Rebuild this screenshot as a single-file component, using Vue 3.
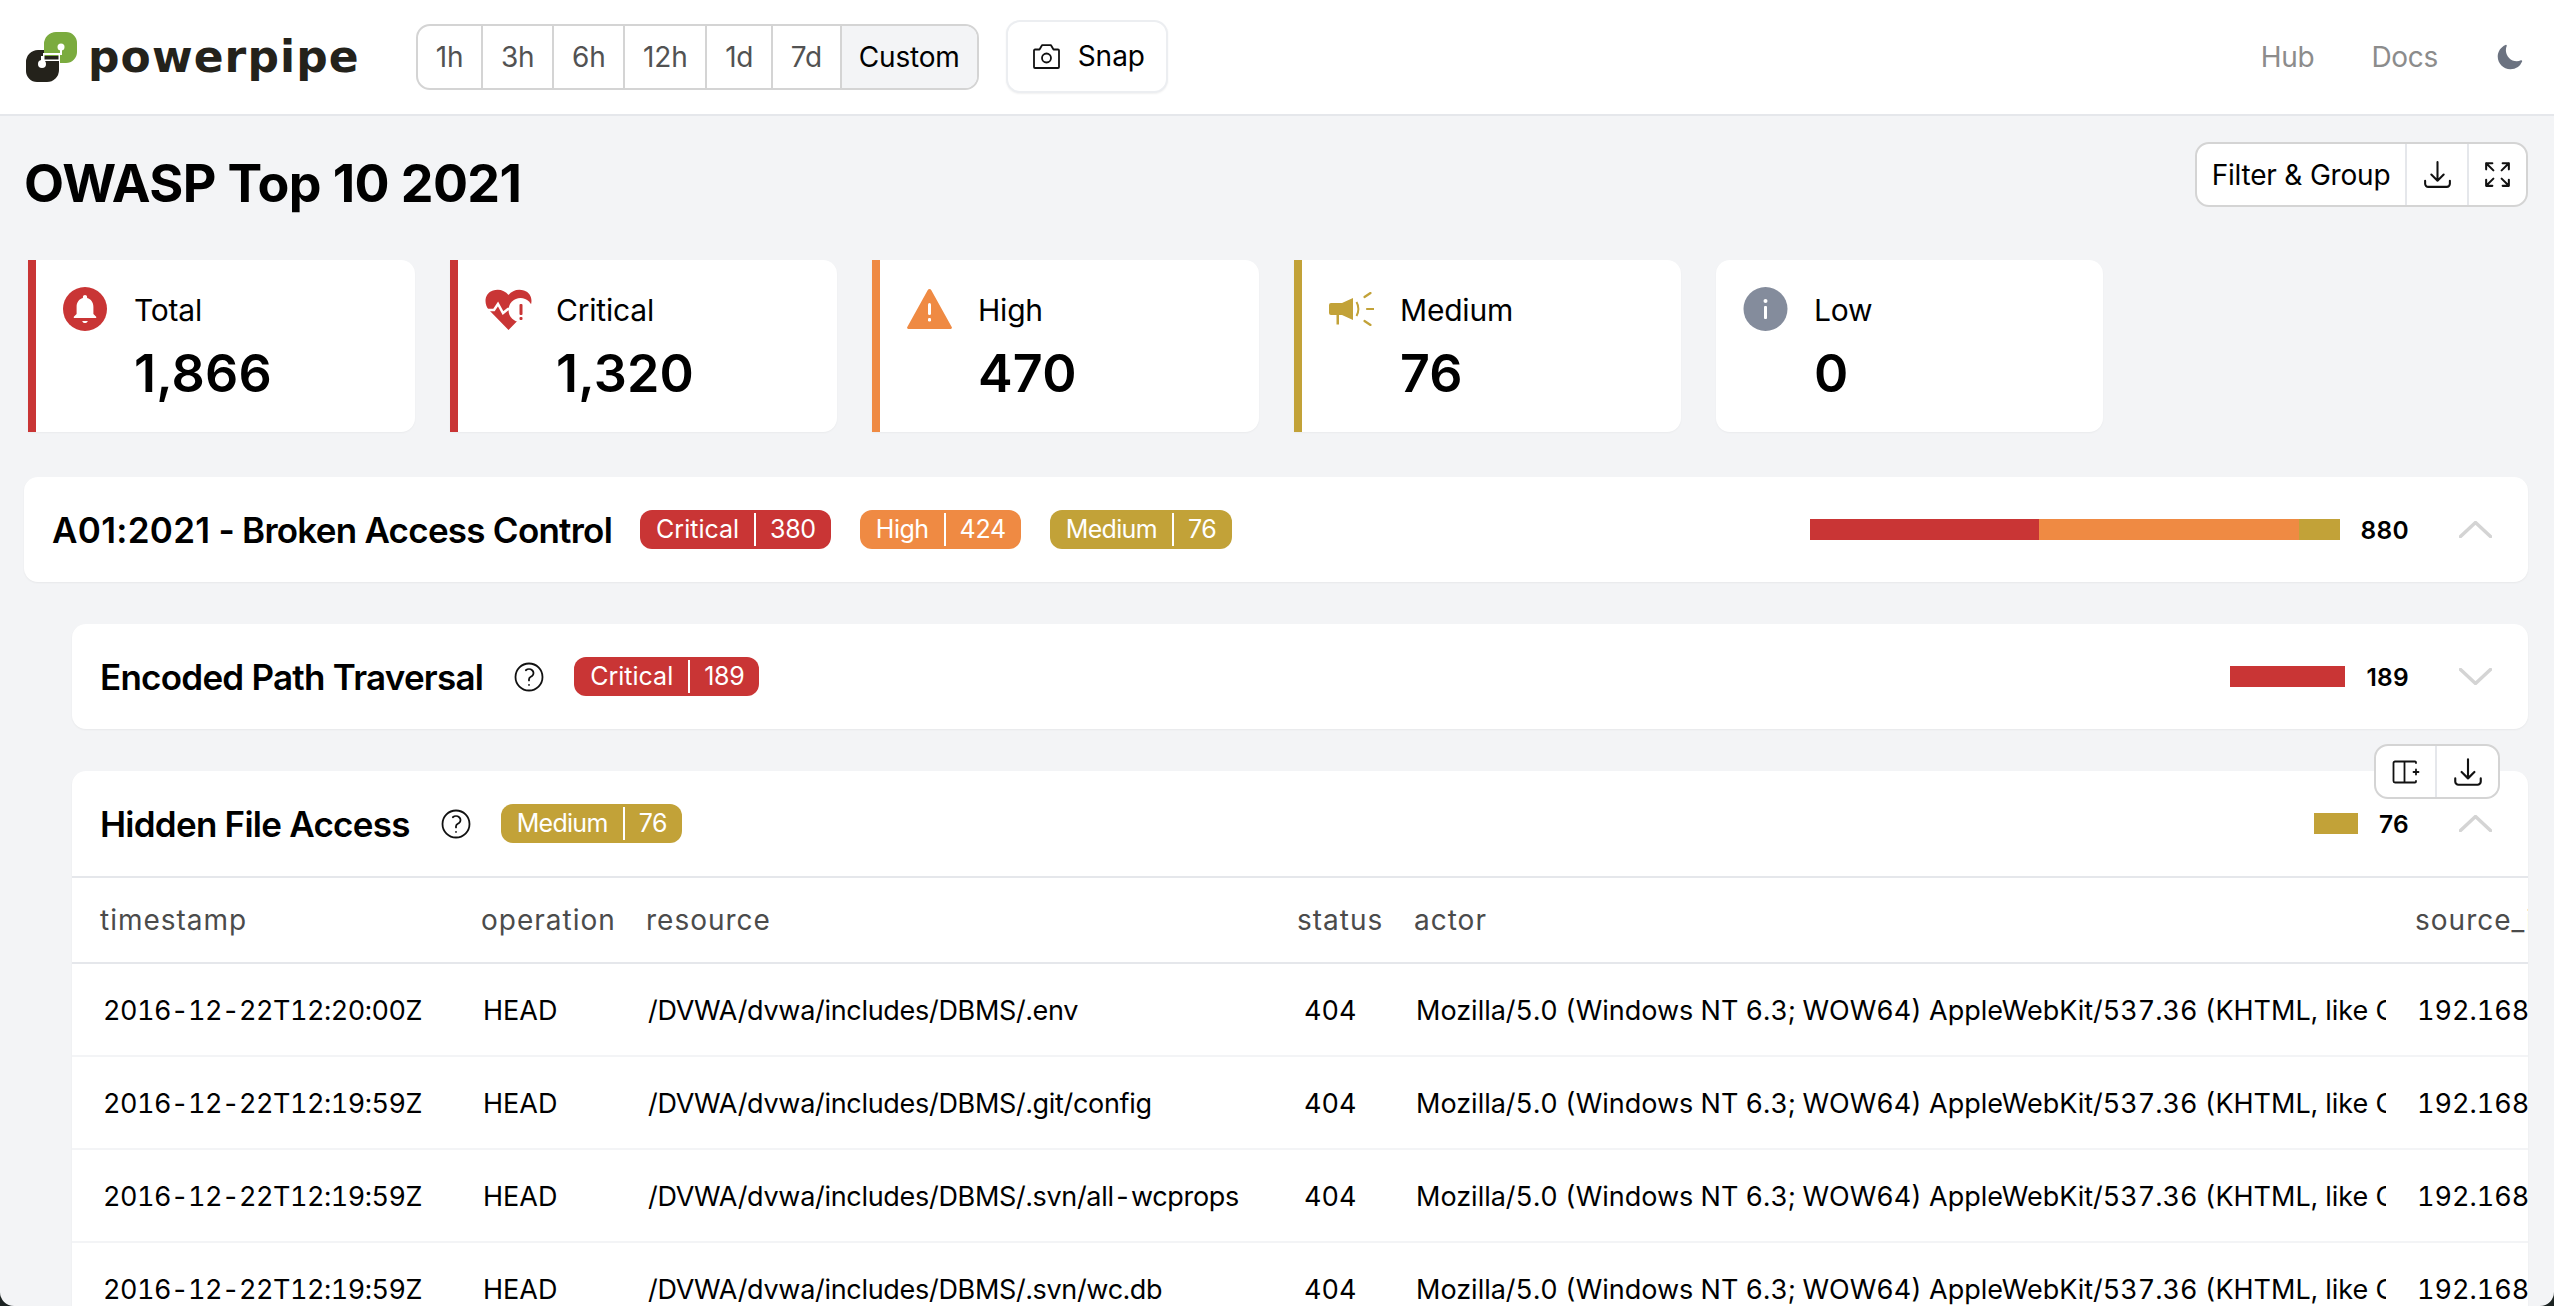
<script setup>
const ranges = ["1h", "3h", "6h", "12h", "1d", "7d"];

const cards = [
  { label: "Total", value: "1,866", icon: "bell", accent: "red" },
  { label: "Critical", value: "1,320", icon: "heart", accent: "red" },
  { label: "High", value: "470", icon: "warn", accent: "orange" },
  { label: "Medium", value: "76", icon: "horn", accent: "yellow" },
  { label: "Low", value: "0", icon: "info", accent: "" },
];

// width is the bar segment in px
const topBadges = [
  { name: "Critical", count: 380, kind: "red", width: 229 },
  { name: "High", count: 424, kind: "orange", width: 260 },
  { name: "Medium", count: 76, kind: "yellow", width: 41 },
];

const columns = ["timestamp", "operation", "resource", "status", "actor", "source_ip"];
const actor =
  "Mozilla/5.0 (Windows NT 6.3; WOW64) AppleWebKit/537.36 (KHTML, like Gecko) Chrome/55.0.2883.87 Safari/537.36";
const rows = [
  { ts: "2016-12-22T12:20:00Z", path: "/DVWA/dvwa/includes/DBMS/.env" },
  { ts: "2016-12-22T12:19:59Z", path: "/DVWA/dvwa/includes/DBMS/.git/config" },
  { ts: "2016-12-22T12:19:59Z", path: "/DVWA/dvwa/includes/DBMS/.svn/all-wcprops" },
  { ts: "2016-12-22T12:19:59Z", path: "/DVWA/dvwa/includes/DBMS/.svn/wc.db" },
];
</script>

<template>
  <div class="page">
    <header class="topbar">
      <div class="logo">
        <svg class="logo-mark" viewBox="0 0 52 50" width="52" height="50">
          <path fill="#7bab3f" d="M18 24V12A12 12 0 0 1 30 0h10a11 11 0 0 1 11 11v9a11 11 0 0 1-11 11h-6v-7z" />
          <circle cx="35" cy="15" r="3.5" fill="#fff" />
          <rect x="34" y="15" width="2" height="8" fill="#fff" />
          <path fill="#24221b" d="M0 30a12 12 0 0 1 12-12h6v6h15v14a12 12 0 0 1-12 12H11A11 11 0 0 1 0 39z" />
          <circle cx="16" cy="32" r="4" fill="#fff" />
          <rect x="15" y="24" width="2.4" height="8" fill="#fff" />
          <rect x="17" y="21" width="17" height="2" fill="#fff" />
          <rect x="17" y="27.500" width="17" height="1.500" fill="#fff" />
          <rect x="17" y="21" width="1.500" height="8" fill="#fff" />
          <rect x="32.500" y="21" width="1.500" height="8" fill="#fff" />
        </svg>
        <span class="wordmark">powerpipe</span>
      </div>

      <div class="btn-group ranges">
        <button v-for="r in ranges" :key="r" class="range">{{ r }}</button>
        <button class="range active">Custom</button>
      </div>

      <button class="snap">
        <svg width="27" height="25" viewBox="0 0 27 25" fill="none" stroke="#111" stroke-width="1.800" stroke-linejoin="round">
          <path d="M1 6.500a1 1 0 0 1 1-1h4.500L9 1.200h9l2.500 4.300H25a1 1 0 0 1 1 1V23a1 1 0 0 1-1 1H2a1 1 0 0 1-1-1z" />
          <circle cx="13.500" cy="14" r="4.500" />
        </svg>
        Snap
      </button>

      <nav class="links">
        <a>Hub</a>
        <a>Docs</a>
        <svg class="moon" width="29" height="29" viewBox="0 0 24 24" fill="#6b7280">
          <path d="M9.528 1.718a.75.75 0 01.162.819A8.97 8.97 0 009 6a9 9 0 009 9 8.97 8.97 0 003.463-.69.75.75 0 01.981.98 10.503 10.503 0 01-9.694 6.46c-5.799 0-10.5-4.701-10.5-10.5 0-4.368 2.667-8.112 6.46-9.694a.75.75 0 01.818.162z" />
        </svg>
      </nav>
    </header>

    <main class="content">
      <div class="title-row">
        <h1>OWASP Top 10 2021</h1>
        <div class="btn-group tools">
          <button class="tool filter">Filter &amp; Group</button>
          <button class="tool icon-tool">
            <svg width="33" height="33" viewBox="0 0 24 24" fill="none" stroke="#111" stroke-width="1.500" stroke-linecap="round" stroke-linejoin="round">
              <path d="M3 16.500v2.250A2.250 2.250 0 0 0 5.250 21h13.500A2.250 2.250 0 0 0 21 18.750V16.500M16.500 12 12 16.500m0 0L7.500 12m4.500 4.500V3" />
            </svg>
          </button>
          <button class="tool icon-tool last">
            <svg width="33" height="33" viewBox="0 0 24 24" fill="none" stroke="#111" stroke-width="1.500" stroke-linecap="round" stroke-linejoin="round">
              <path d="M3.750 3.750v4.500m0-4.500h4.500m-4.500 0L9 9M3.750 20.250v-4.500m0 4.500h4.500m-4.500 0L9 15M20.250 3.750h-4.500m4.500 0v4.500m0-4.500L15 9m5.250 11.250h-4.500m4.500 0v-4.500m0 4.500L15 15" />
            </svg>
          </button>
        </div>
      </div>

      <section class="cards">
        <div v-for="c in cards" :key="c.label" class="card" :class="c.accent">
          <div class="card-icon">
            <svg v-if="c.icon === 'bell'" width="44" height="44" viewBox="0 0 44 44">
              <circle cx="22" cy="22" r="22" fill="#c93535" />
              <path fill="#fff" transform="translate(5.200 4.500) scale(1.400)" d="M12 22.500c1 0 1.800-.6 2-1.500h-4c.2.900 1 1.500 2 1.500zm6-6.500v-5c0-3.070-1.640-5.640-4.500-6.320V4c0-.830-.670-1.500-1.500-1.500s-1.500.670-1.500 1.500v.680C7.630 5.360 6 7.920 6 11v5l-2 2v1h16v-1l-2-2z" />
            </svg>
            <svg v-else-if="c.icon === 'heart'" class="heart" width="47" height="41" viewBox="0 0 47 41">
              <path fill="#c93535" d="M23.500 41 4 21C-2 14 0 4 8 1.500 14-.5 20 1.500 23.500 6 27 1.500 33-.5 39 1.500 47 4 49 14 43 21z" />
              <circle cx="35.500" cy="21" r="12" fill="#fff" />
              <path fill="none" stroke="#fff" stroke-width="2.500" d="M0 21h9l4-6 5 9 5-4h8" />
              <rect x="34.500" y="15" width="3" height="11" rx="1" fill="#c93535" />
              <rect x="34.500" y="28" width="3" height="3" rx="1" fill="#c93535" />
            </svg>
            <svg v-else-if="c.icon === 'warn'" width="45" height="40" viewBox="0 0 45 40">
              <path fill="#ef8a43" d="M20.800 1a2 2 0 0 1 3.400 0l20.500 37a1.300 1.300 0 0 1-1.200 2H1.500a1.300 1.300 0 0 1-1.200-2z" />
              <rect x="21" y="14" width="3" height="12" rx="1.500" fill="#fff" />
              <rect x="21" y="29" width="3" height="3.500" rx="1.200" fill="#fff" />
            </svg>
            <svg v-else-if="c.icon === 'horn'" width="45" height="34" viewBox="0 0 45 34" fill="#c2a238">
              <path d="M2 11h11L24 6v22l-11-5H9v9H8V23H2a2 2 0 0 1-2-2v-8a2 2 0 0 1 2-2z" />
              <rect x="7.500" y="23" width="2.500" height="9.500" />
              <path fill="none" stroke="#c2a238" stroke-width="2" d="M27.500 10c2.500 4 2.500 10 0 14" />
              <path fill="none" stroke="#c2a238" stroke-width="2.200" stroke-linecap="round" d="M35.500 5l6-4M38 17h6.500M35.500 29l6 4" />
            </svg>
            <svg v-else width="46" height="44" viewBox="0 0 44 44">
              <circle cx="22" cy="22" r="22" fill="#848c9c" />
              <rect x="20.500" y="19" width="3" height="13" rx="1" fill="#fff" />
              <circle cx="22" cy="14" r="2" fill="#fff" />
            </svg>
          </div>
          <div class="card-body">
            <div class="card-label">{{ c.label }}</div>
            <div class="card-value">{{ c.value }}</div>
          </div>
        </div>
      </section>

      <section class="panel">
        <div class="group-row">
          <span class="group-title"><span class="code">A01:2021</span> - Broken Access Control</span>
          <span v-for="b in topBadges" :key="b.name" class="badge" :class="b.kind">
            <span class="badge-name">{{ b.name }}</span><span class="badge-count">{{ b.count }}</span>
          </span>
          <span class="bar">
            <span v-for="b in topBadges" :key="b.name" class="seg" :class="b.kind" :style="{ width: b.width + 'px' }"></span>
          </span>
          <span class="count">880</span>
          <svg class="chevron" width="33" height="17" viewBox="0 0 33 17" fill="none" stroke="#d4d4d4" stroke-width="3.500" stroke-linecap="round" stroke-linejoin="round">
            <path d="M1.500 15.500 16.500 1.500l15 14" />
          </svg>
        </div>
      </section>

      <section class="panel nested">
        <div class="group-row">
          <span class="group-title">Encoded Path Traversal</span>
          <svg class="help" width="36" height="36" viewBox="0 0 24 24" fill="none" stroke="#111" stroke-width="1.200" stroke-linecap="round" stroke-linejoin="round">
            <path d="M9.879 7.519c1.171-1.025 3.071-1.025 4.242 0 1.172 1.025 1.172 2.687 0 3.712-.203.179-.43.326-.67.442-.745.361-1.450.999-1.450 1.827v.750M21 12a9 9 0 11-18 0 9 9 0 0118 0zm-9 5.250h.008v.008H12v-.008z" />
          </svg>
          <span class="badge red">
            <span class="badge-name">Critical</span><span class="badge-count">189</span>
          </span>
          <span class="bar">
            <span class="seg red" :style="{ width: '115px' }"></span>
          </span>
          <span class="count">189</span>
          <svg class="chevron" width="33" height="17" viewBox="0 0 33 17" fill="none" stroke="#d4d4d4" stroke-width="3.500" stroke-linecap="round" stroke-linejoin="round">
            <path d="M1.500 1.500 16.500 15.500l15-14" />
          </svg>
        </div>
      </section>

      <section class="panel nested open">
        <div class="hover-tools btn-group">
          <button class="tool small">
            <svg width="28" height="24" viewBox="0 0 28 24" fill="none" stroke="#111" stroke-width="1.800" stroke-linecap="round" stroke-linejoin="round">
              <path d="M24 3V2.500a1 1 0 0 0-1-1H3a1.500 1.500 0 0 0-1.500 1.500v18a1.500 1.500 0 0 0 1.500 1.500h20a1 1 0 0 0 1-1V21M12.500 1.500v21M24 9.500v5M21.500 12h5" />
            </svg>
          </button>
          <button class="tool small last">
            <svg width="34" height="34" viewBox="0 0 24 24" fill="none" stroke="#111" stroke-width="1.500" stroke-linecap="round" stroke-linejoin="round">
              <path d="M3 16.500v2.250A2.250 2.250 0 0 0 5.250 21h13.500A2.250 2.250 0 0 0 21 18.750V16.500M16.500 12 12 16.500m0 0L7.500 12m4.500 4.500V3" />
            </svg>
          </button>
        </div>
        <div class="group-row">
          <span class="group-title">Hidden File Access</span>
          <svg class="help" width="36" height="36" viewBox="0 0 24 24" fill="none" stroke="#111" stroke-width="1.200" stroke-linecap="round" stroke-linejoin="round">
            <path d="M9.879 7.519c1.171-1.025 3.071-1.025 4.242 0 1.172 1.025 1.172 2.687 0 3.712-.203.179-.43.326-.67.442-.745.361-1.450.999-1.450 1.827v.750M21 12a9 9 0 11-18 0 9 9 0 0118 0zm-9 5.250h.008v.008H12v-.008z" />
          </svg>
          <span class="badge yellow">
            <span class="badge-name">Medium</span><span class="badge-count">76</span>
          </span>
          <span class="bar">
            <span class="seg yellow" :style="{ width: '44px' }"></span>
          </span>
          <span class="count">76</span>
          <svg class="chevron" width="33" height="17" viewBox="0 0 33 17" fill="none" stroke="#d4d4d4" stroke-width="3.500" stroke-linecap="round" stroke-linejoin="round">
            <path d="M1.500 15.500 16.500 1.500l15 14" />
          </svg>
        </div>
        <div class="table-wrap">
          <table>
            <colgroup>
              <col style="width: 407px" />
              <col style="width: 165px" />
              <col style="width: 651px" />
              <col style="width: 117px" />
              <col style="width: 1001px" />
              <col style="width: 300px" />
            </colgroup>
            <thead>
              <tr>
                <th v-for="c in columns" :key="c">{{ c }}</th>
              </tr>
            </thead>
            <tbody>
              <tr v-for="(r, i) in rows" :key="i">
                <td class="ts">{{ r.ts }}</td>
                <td>HEAD</td>
                <td class="path">{{ r.path }}</td>
                <td class="status">404</td>
                <td><div class="clip">{{ actor }}</div></td>
                <td>192.168.56.1</td>
              </tr>
            </tbody>
          </table>
        </div>
      </section>
    </main>
  </div>
</template>

<style>
html {
  background: #1c2322;
}
body {
  margin: 0;
  overflow: hidden;
}
</style>

<style scoped>
.page {
  height: 100vh;
  overflow: hidden;
  display: flex;
  flex-direction: column;
  background: #f3f4f6;
  color: #000;
  font-family: Inter, "Liberation Sans", sans-serif;
  border-radius: 0 0 14px 14px;
}

button {
  font: inherit;
  background: none;
  border: 0;
  padding: 0;
  color: inherit;
}

.topbar {
  flex: none;
  height: 114px;
  display: flex;
  align-items: center;
  padding: 0 30px 0 26px;
  background: #fff;
  border-bottom: 2px solid #e5e7eb;
}

.logo {
  width: 390px;
  display: flex;
  align-items: center;
  gap: 10px;
}
.wordmark {
  font-family: "DejaVu Sans", sans-serif;
  font-weight: 700;
  font-size: 44px;
  line-height: 50px;
  letter-spacing: 1.100px;
  color: #24221b;
}

.btn-group {
  display: flex;
  border: 2px solid #d4d4d4;
  border-radius: 14px;
  background: #fff;
  overflow: hidden;
}

.ranges {
  height: 66px;
  box-sizing: border-box;
  margin-bottom: 1px;
}
.range {
  font-size: 28px;
  letter-spacing: -0.2px;
  padding: 0 17.800px;
  color: #525252;
  border-right: 2px solid #d4d4d4;
}
.range.active {
  color: #000;
  background: #f3f4f6;
  border-right: 0;
  padding: 0 17px;
}

.snap {
  margin: 0 0 2px 27px;
  height: 73px;
  box-sizing: border-box;
  padding: 0 21px 0 25px;
  display: flex;
  align-items: center;
  gap: 18px;
  font-size: 28px;
  border: 2px solid #eceef1;
  border-radius: 14px;
  background: #fff;
  box-shadow: 0 1px 2px rgba(0, 0, 0, 0.06);
}

.links {
  margin-left: auto;
  display: flex;
  align-items: center;
  font-size: 28px;
  letter-spacing: -0.3px;
  color: #8c8c8c;
}
.links a:first-child {
  margin-right: 57px;
}
.moon {
  margin-left: 57px;
}

.content {
  flex: 1;
  min-height: 0;
  padding: 0 26px 0 24px;
}

.title-row {
  height: 144px;
  display: flex;
  align-items: flex-start;
  justify-content: space-between;
}
h1 {
  margin: 40px 0 0;
  font-size: 52px;
  line-height: 56px;
  font-weight: 700;
  letter-spacing: -0.6px;
}

.tools {
  margin: 26px 0 0 0;
  height: 65px;
  box-sizing: border-box;
}
.tool {
  display: flex;
  align-items: center;
  justify-content: center;
  font-size: 28px;
  letter-spacing: -0.2px;
  border-right: 2px solid #e5e7eb;
}
.tool.last {
  border-right: 0;
}
.filter {
  width: 210px;
}
.icon-tool {
  width: 62px;
}
.icon-tool.last {
  width: 57px;
}

.cards {
  display: flex;
  gap: 35px;
  padding-left: 4px;
  margin-bottom: 45px;
}
.card {
  width: 387px;
  height: 172px;
  box-sizing: border-box;
  display: flex;
  padding: 27px 0 0 27px;
  background: #fff;
  border-radius: 0 14px 14px 0;
  box-shadow: 0 1px 2px rgba(0, 0, 0, 0.04);
}
.card.red {
  border-left: 8px solid #c93535;
}
.card.orange {
  border-left: 8px solid #ef8a43;
}
.card.yellow {
  border-left: 8px solid #c2a238;
}
.card:not(.red):not(.orange):not(.yellow) {
  border-radius: 14px;
}
.card-icon {
  flex: none;
  width: 45px;
  height: 44px;
  margin-right: 26px;
  display: flex;
  align-items: center;
}
.heart {
  flex: none;
}
.card-label {
  font-size: 30px;
  line-height: 46px;
  letter-spacing: -0.2px;
}
.card-value {
  margin-top: 10px;
  font-size: 52px;
  line-height: 62px;
  font-weight: 600;
  letter-spacing: 0.2px;
}

.panel {
  position: relative;
  background: #fff;
  border-radius: 14px;
  box-shadow: 0 1px 2px rgba(0, 0, 0, 0.05);
  margin-bottom: 42px;
}
.nested {
  margin-left: 48px;
}
.open {
  margin-bottom: 0;
}

.group-row {
  height: 105px;
  display: flex;
  align-items: center;
  padding: 0 36px 0 28px;
}
.group-title {
  font-size: 35px;
  letter-spacing: -0.75px;
  font-weight: 600;
  margin-right: 28px;
  white-space: nowrap;
}
.code {
  letter-spacing: 0.3px;
}
.help {
  margin: 0 27px 0 0;
  flex: none;
}

.badge {
  height: 39px;
  display: inline-flex;
  align-items: center;
  border-radius: 12px;
  margin-right: 29px;
  color: #fff;
  font-size: 25px;
  line-height: 33px;
  padding: 0 15px 0 16px;
}
.badge.red,
.seg.red {
  background: #c93535;
}
.badge.orange,
.seg.orange {
  background: #ef8a43;
}
.badge.yellow,
.seg.yellow {
  background: #c2a238;
}
.badge-name {
  padding-right: 15px;
  border-right: 2px solid #fff;
}
.badge.orange .badge-name {
  letter-spacing: -0.5px;
}
.badge.yellow .badge-name {
  letter-spacing: -0.7px;
}
.badge-count {
  padding-left: 14px;
  letter-spacing: -0.3px;
}

.bar {
  margin-left: auto;
  display: flex;
  height: 21px;
}
.seg {
  display: block;
}
.count {
  margin-left: 21px;
  font-size: 24.500px;
  font-weight: 600;
  letter-spacing: 0.3px;
}
.chevron {
  margin-left: 50px;
  flex: none;
}

.hover-tools {
  position: absolute;
  top: -27px;
  right: 28px;
  height: 55px;
  box-sizing: border-box;
  z-index: 1;
}
.small {
  width: 61px;
}

.table-wrap {
  overflow: hidden;
  border-top: 2px solid #e5e7eb;
}
table {
  table-layout: fixed;
  width: 2641px;
  border-collapse: separate;
  border-spacing: 0;
  font-size: 27px;
  font-variant-numeric: tabular-nums;
}
th {
  height: 86px;
  box-sizing: border-box;
  padding: 0 0 0 2px;
  text-align: left;
  font-size: 28px;
  font-weight: 400;
  color: #4b4b4b;
  letter-spacing: 1px;
  border-bottom: 2px solid #e5e7eb;
}
th:first-child {
  padding-left: 28px;
}
td {
  height: 93px;
  box-sizing: border-box;
  padding: 1px 0 0 4px;
  white-space: nowrap;
  border-bottom: 2px solid #f3f4f6;
}
td:first-child {
  padding-left: 31px;
}
td.ts {
  letter-spacing: -0.5px;
}
td.path {
  letter-spacing: -0.3px;
}
td.status {
  padding-left: 9px;
}
.clip {
  width: 970px;
  overflow: hidden;
}
</style>
